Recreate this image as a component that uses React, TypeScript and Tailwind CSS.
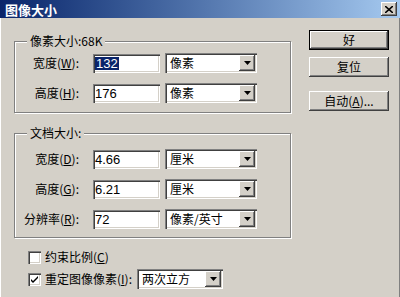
import React from "react";

const SUNKEN =
  "shadow-[inset_1px_1px_0_#808080,inset_2px_2px_0_#404040,inset_-1px_-1px_0_#ffffff,inset_-2px_-2px_0_#d4d0c8]";
const RAISED =
  "shadow-[inset_-1px_-1px_0_#404040,inset_1px_1px_0_#ffffff,inset_-2px_-2px_0_#808080,inset_2px_2px_0_#d4d0c8]";
const ETCHED = "border border-[#808080] shadow-[inset_1px_1px_0_#ffffff,1px_1px_0_#ffffff]";

function Arrow() {
  return (
    <div className={`w-[16px] h-[16px] bg-[#d4d0c8] ${RAISED} flex items-center justify-center shrink-0`}>
      <svg width="7" height="4" viewBox="0 0 7 4">
        <path d="M0 0h7L3.5 4z" fill="#000" />
      </svg>
    </div>
  );
}

function Select({ w, text }: { w: string; text: string }) {
  return (
    <div className={`${w} h-[20px] bg-white ${SUNKEN} flex items-center pl-[5px] pr-[2px]`}>
      <span className="flex-1 text-[12px] leading-none text-black whitespace-nowrap">{text}</span>
      <Arrow />
    </div>
  );
}

function Row({
  label,
  mn,
  value,
  unit,
  selected,
}: {
  label: string;
  mn: string;
  value: string;
  unit: string;
  selected?: boolean;
}) {
  return (
    <div className="flex items-center h-[20px]">
      <div className="w-[64px] text-right text-[12px] leading-none whitespace-nowrap text-black">
        {label}(<u>{mn}</u>):
      </div>
      <div
        className={`ml-[14px] w-[67px] h-[19px] bg-white ${SUNKEN} flex items-center pl-[2px] font-['Liberation_Sans',sans-serif] text-[13px] leading-none text-black`}
      >
        {selected ? <span className="bg-[#0a246a] text-white px-[1px]">{value}</span> : <span>{value}</span>}
      </div>
      <div className="ml-[5px]">
        <Select w="w-[92px]" text={unit} />
      </div>
    </div>
  );
}

function Button({ children, def }: { children: React.ReactNode; def?: boolean }) {
  return (
    <div
      className={`w-[80px] h-[20px] flex items-center justify-center text-[12px] leading-none text-black ${
        def ? "border border-black" : ""
      } bg-[#d4d0c8]`}
    >
      <div className={`w-full h-full flex items-center justify-center ${RAISED}`}>{children}</div>
    </div>
  );
}

function Checkbox({ checked }: { checked?: boolean }) {
  return (
    <div className={`w-[13px] h-[13px] bg-white ${SUNKEN} flex items-center justify-center shrink-0`}>
      {checked && (
        <svg width="7" height="7" viewBox="0 0 7 7">
          <path d="M0 3l2 2 5-5v2l-5 5-2-2z" fill="#000" />
        </svg>
      )}
    </div>
  );
}

export default function App() {
  return (
    <div className="w-[400px] h-[297px] bg-[#d4d0c8] overflow-hidden font-['Noto_Sans_CJK_SC',sans-serif] flex flex-col">
      <div className="h-[18px] bg-linear-to-r from-[#0a246a] to-[#a6caf0] flex items-center justify-between pl-[5px] pr-[3px] shrink-0">
        <span className="text-white font-bold text-[13px] leading-none">图像大小</span>
        <div className={`w-[16px] h-[14px] bg-[#d4d0c8] ${RAISED} flex items-center justify-center`}>
          <svg width="8" height="7" viewBox="0 0 8 7">
            <path d="M0 0L8 7M8 0L0 7" stroke="#000" strokeWidth="1.6" />
          </svg>
        </div>
      </div>
      <div className="flex flex-1 items-start border-l border-l-[#ffffff] border-r border-r-[#808080]">
        <div className="ml-[13px] mt-[23px] w-[277px] flex flex-col">
          <div className={`relative ${ETCHED} h-[72px] pt-[11px] flex flex-col gap-[10px]`}>
            <span className="absolute -top-[9px] left-[12px] px-[3px] bg-[#d4d0c8] text-[12px] leading-[16px] text-black">
              像素大小:68K
            </span>
            <Row label="宽度" mn="W" value="132" unit="像素" selected />
            <Row label="高度" mn="H" value="176" unit="像素" />
          </div>
          <div className={`relative ${ETCHED} mt-[20px] h-[105px] pt-[15px] flex flex-col gap-[10px]`}>
            <span className="absolute -top-[9px] left-[12px] px-[3px] bg-[#d4d0c8] text-[12px] leading-[16px] text-black">
              文档大小:
            </span>
            <Row label="宽度" mn="D" value="4.66" unit="厘米" />
            <Row label="高度" mn="G" value="6.21" unit="厘米" />
            <Row label="分辨率" mn="R" value="72" unit="像素/英寸" />
          </div>
          <div className="mt-[9px] flex flex-col gap-[2px] pl-[14px]">
            <div className="flex items-center h-[20px]">
              <Checkbox />
              <span className="ml-[4px] text-[12px] leading-none text-black">
                约束比例(<u>C</u>)
              </span>
            </div>
            <div className="flex items-center h-[20px]">
              <Checkbox checked />
              <span className="ml-[4px] text-[12px] leading-none text-black whitespace-nowrap">
                重定图像像素(<u>I</u>):
              </span>
              <div className="ml-[5px]">
                <Select w="w-[86px]" text="两次立方" />
              </div>
            </div>
          </div>
        </div>
        <div className="ml-[18px] mt-[12px] flex flex-col">
          <Button def>好</Button>
          <div className="mt-[7px]">
            <Button>复位</Button>
          </div>
          <div className="mt-[14px]">
            <Button>
              自动(<u>A</u>)...
            </Button>
          </div>
        </div>
      </div>
    </div>
  );
}
